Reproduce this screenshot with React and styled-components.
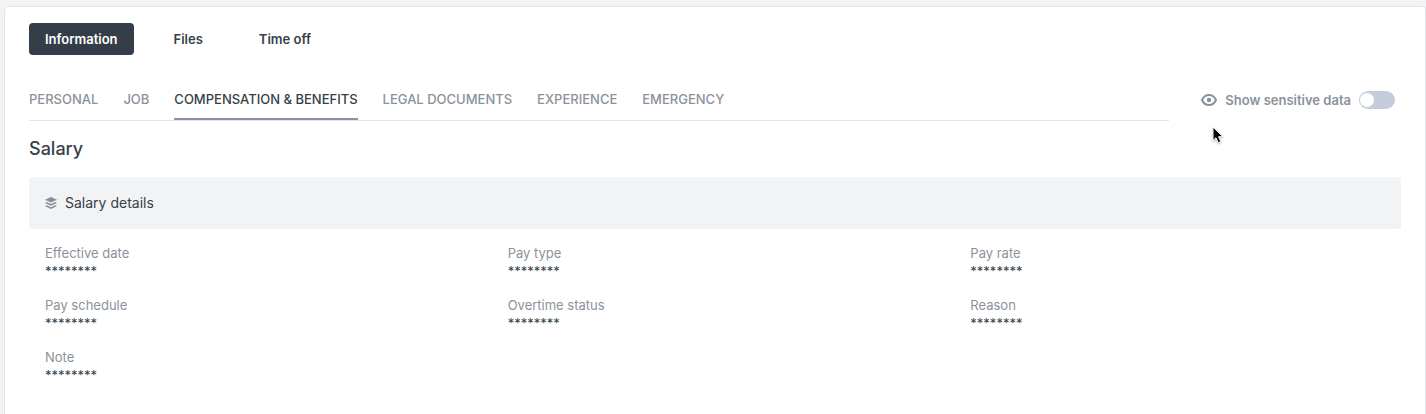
import React, { useState } from "react";
import styled, { createGlobalStyle } from "styled-components";

const GlobalStyle = createGlobalStyle`
  * {
    box-sizing: border-box;
  }
  body {
    margin: 0;
    background: #f2f3f5;
    color: #363f48;
    font-family: Inter, "Liberation Sans", sans-serif;
    font-size: 13px;
    line-height: 16px;
  }
  button {
    font: inherit;
    border: 0;
    cursor: pointer;
  }
`;

const Page = styled.div`
  display: flex;
  min-height: 100vh;
  padding: 6px 0 0 4px;
`;

const Card = styled.main`
  flex: 1;
  padding: 16px 24px 32px;
  background: #fff;
  border: 1px solid #e1e5ea;
  border-bottom: 0;
  border-radius: 4px 4px 0 0;
`;

const MainTabs = styled.nav`
  display: flex;
  gap: 24px;
`;

const MainTab = styled.button`
  height: 32px;
  padding: 0 16px;
  border-radius: 4px;
  font-weight: 600;
  background: ${props => (props.$active ? "#343e48" : "transparent")};
  color: ${props => (props.$active ? "#fff" : "#363f48")};
`;

const SubHeader = styled.div`
  display: flex;
  align-items: flex-start;
  gap: 32px;
  margin-top: 32px;
  padding-right: 6px;
`;

const SubTabs = styled.nav`
  display: flex;
  flex: 1;
  gap: 25px;
  border-bottom: 1px solid #e1e4e8;
`;

const SubTab = styled.button`
  height: 33px;
  padding: 4px 0 11px;
  background: transparent;
  border-bottom: 2px solid ${props => (props.$active ? "#87929d" : "transparent")};
  color: ${props => (props.$active ? "#363f48" : "#8a929b")};
  font-weight: 500;
  text-transform: uppercase;
  white-space: nowrap;
`;

const SensitiveToggle = styled.label`
  display: flex;
  align-items: center;
  gap: 8px;
  margin-top: 4px;
  color: #8a929b;
  font-weight: 600;
  white-space: nowrap;
  cursor: pointer;
`;

const Switch = styled.input`
  appearance: none;
  display: flex;
  width: 36px;
  height: 18px;
  margin: 0;
  padding: 2px 1px;
  border-radius: 9px;
  background: ${props => (props.checked ? "#343e48" : "#c5cddc")};
  justify-content: ${props => (props.checked ? "flex-end" : "flex-start")};
  cursor: pointer;

  &::before {
    content: "";
    width: 14px;
    height: 14px;
    border-radius: 50%;
    background: #fff;
  }
`;

const Title = styled.h2`
  margin: 16px 0;
  font-size: 18px;
  font-weight: 500;
  line-height: 24px;
`;

const PanelHeader = styled.header`
  display: flex;
  align-items: center;
  gap: 8px;
  height: 52px;
  padding: 0 16px;
  border-radius: 2px;
  background: #f2f3f5;
`;

const PanelTitle = styled.h3`
  margin: 0;
  font-size: 14px;
  font-weight: 400;
`;

const Details = styled.dl`
  display: grid;
  grid-template-columns: repeat(3, 1fr);
  gap: 16px 48px;
  margin: 0;
  padding: 16px;
`;

const Label = styled.dt`
  color: #8a929b;
`;

const Value = styled.dd`
  margin: 0;
  line-height: 20px;
`;

const Pointer = styled.svg`
  position: absolute;
  top: 126px;
  left: 1211px;
  pointer-events: none;
  filter: drop-shadow(0 1px 1px rgba(0, 0, 0, 0.3));
`;

const mainTabs = ["Information", "Files", "Time off"];

const subTabs = [
  "Personal",
  "Job",
  "Compensation & Benefits",
  "Legal documents",
  "Experience",
  "Emergency"
];

const fields = [
  "Effective date",
  "Pay type",
  "Pay rate",
  "Pay schedule",
  "Overtime status",
  "Reason",
  "Note"
];

const EyeIcon = () => (
  <svg width="16" height="12" viewBox="0 0 16 12" fill="none" aria-hidden="true">
    <path
      d="M1 6C2.5 2.700 5 1 8 1s5.500 1.700 7 5c-1.500 3.300-4 5-7 5S2.500 9.300 1 6z"
      stroke="#87919b"
      strokeWidth="2"
      strokeLinejoin="round"
    />
    <circle cx="8" cy="6" r="2.200" fill="#87919b" />
  </svg>
);

const LayersIcon = () => (
  <svg width="12" height="12" viewBox="0 0 12 12" fill="#858f99" aria-hidden="true">
    <path d="M6 0l6 2.800-6 2.800-6-2.800z" />
    <path d="M0 5.900l1.700-.8L6 7.100l4.300-2 1.700.8-6 2.800z" />
    <path d="M0 9.100l1.700-.8L6 10.300l4.300-2 1.700.8-6 2.800z" />
  </svg>
);

const App = () => {
  const [mainTab, setMainTab] = useState("Information");
  const [subTab, setSubTab] = useState("Compensation & Benefits");
  const [visible, setVisible] = useState(false);

  return (
    <Page>
      <GlobalStyle />
      <Card>
        <MainTabs>
          {mainTabs.map(tab => (
            <MainTab
              key={tab}
              type="button"
              $active={tab === mainTab}
              onClick={() => setMainTab(tab)}
            >
              {tab}
            </MainTab>
          ))}
        </MainTabs>

        <SubHeader>
          <SubTabs>
            {subTabs.map(tab => (
              <SubTab
                key={tab}
                type="button"
                $active={tab === subTab}
                onClick={() => setSubTab(tab)}
              >
                {tab}
              </SubTab>
            ))}
          </SubTabs>
          <SensitiveToggle htmlFor="sensitive">
            <EyeIcon />
            Show sensitive data
            <Switch
              id="sensitive"
              type="checkbox"
              role="switch"
              checked={visible}
              onChange={() => setVisible(!visible)}
            />
          </SensitiveToggle>
        </SubHeader>

        <Title>Salary</Title>
        <section>
          <PanelHeader>
            <LayersIcon />
            <PanelTitle>Salary details</PanelTitle>
          </PanelHeader>
          <Details>
            {fields.map(field => (
              <div key={field}>
                <Label>{field}</Label>
                <Value>********</Value>
              </div>
            ))}
          </Details>
        </section>
      </Card>
      <Pointer width="14" height="20" viewBox="0 0 14 20" aria-hidden="true">
        <path
          d="M2 1v13.500l3-2.800 2.200 5 2.600-1.100-2.200-4.900h4.200z"
          fill="#000"
          stroke="#fff"
          strokeWidth="1"
        />
      </Pointer>
    </Page>
  );
};

export default App;
